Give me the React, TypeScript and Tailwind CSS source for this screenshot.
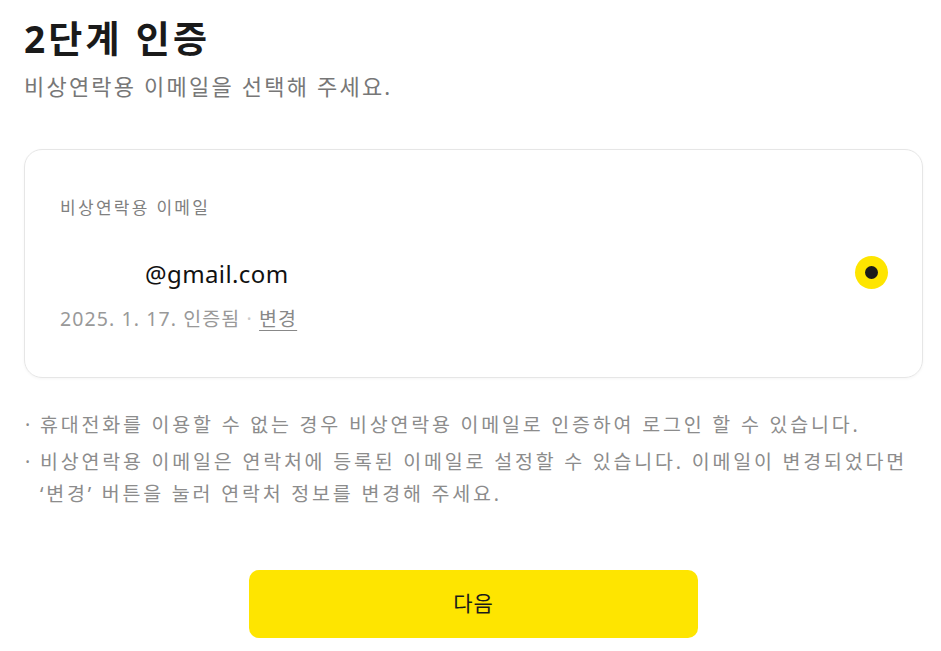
import React from "react";

const KR = { fontFamily: '"Noto Sans", "Noto Sans CJK KR", sans-serif' } as React.CSSProperties;

export default function App() {
  return (
    <div className="w-[941px] h-[651px] bg-white overflow-hidden" style={KR}>
      <div className="pl-[24px] pr-[18px] pt-[12px]">
        <h1 className="text-[37px] leading-[54px] font-bold text-[#1a1a1a] tracking-[3.2px]">2단계 인증</h1>
        <p className="mt-[4px] text-[22px] leading-[32px] text-[#777777] tracking-[2.2px]">비상연락용 이메일을 선택해 주세요.</p>

        <div className="mt-[47px] h-[229px] rounded-[18px] border border-[#e6e6e6] shadow-[0_1px_3px_rgba(0,0,0,0.04)] pl-[35px] pr-[34px] pt-[45px]">
          <div className="text-[17px] leading-[26px] text-[#808080] tracking-[2.3px]">비상연락용 이메일</div>
          <div className="mt-[35px] flex items-center justify-between">
            <div className="flex items-center">
              <span className="inline-block w-[85px] h-[30px] bg-white" />
              <span className="text-[24px] leading-[34px] text-[#111111] tracking-[0.4px]">@gmail.com</span>
            </div>
            <div className="mb-[2px] w-[33px] h-[33px] rounded-full bg-[#fee500] flex items-center justify-center">
              <div className="w-[13px] h-[13px] rounded-full bg-[#1a1a1a]" />
            </div>
          </div>
          <div className="mt-[14px] text-[19.5px] leading-[28px] text-[#999999] tracking-[1.1px]">
            2025. 1. 17. 인증됨 <span className="text-[#cccccc]">·</span>{" "}
            <span className="text-[#888888] underline underline-offset-4">변경</span>
          </div>
        </div>

        <ul className="mt-[31px] text-[19.5px] leading-[32px] text-[#8c8c8c] tracking-[2.8px]">
          <li className="flex">
            <span className="w-[16px] shrink-0 pl-[1px] tracking-[0px]">·</span>
            <span>휴대전화를 이용할 수 없는 경우 비상연락용 이메일로 인증하여 로그인 할 수 있습니다.</span>
          </li>
          <li className="flex mt-[5px]">
            <span className="w-[16px] shrink-0 pl-[1px] tracking-[0px]">·</span>
            <span>
              비상연락용 이메일은 연락처에 등록된 이메일로 설정할 수 있습니다. 이메일이 변경되었다면
              <br />
              ‘변경’ 버튼을 눌러 연락처 정보를 변경해 주세요.
            </span>
          </li>
        </ul>

        <div className="mt-[60px] flex justify-center">
          <button className="w-[449px] h-[68px] rounded-[10px] bg-[#fee500] text-[21px] text-[#1a1a1a] tracking-[1px]">
            다음
          </button>
        </div>
      </div>
    </div>
  );
}
